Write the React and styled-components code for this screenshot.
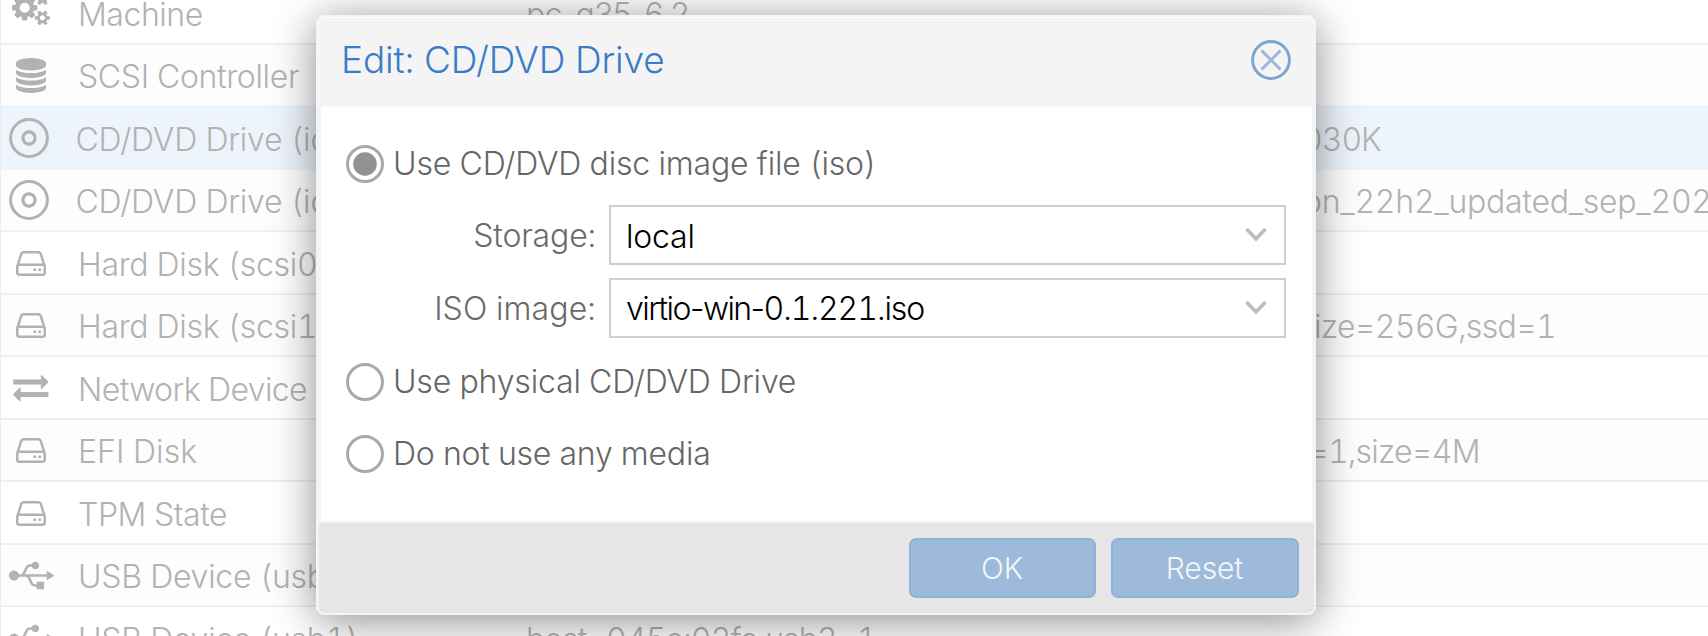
import React from "react";
import styled, { createGlobalStyle } from "styled-components";
import { FaUsb } from "react-icons/fa";

const GlobalStyle = createGlobalStyle`
  * { box-sizing: border-box; }
  body {
    margin: 0;
    overflow: hidden;
    background: #fff;
    font-family: Inter, "Liberation Sans", sans-serif;
    font-weight: 300;
    font-variant-numeric: tabular-nums;
  }
`;

const Screen = styled.div`
  position: relative;
  width: 1708px;
  height: 636px;
  overflow: hidden;
`;

const Grid = styled.div`
  display: flex;
  flex-direction: column;
  border-left: 1px solid #ececec;
`;

const Row = styled.div`
  display: flex;
  flex: none;
  align-items: flex-end;
  height: ${(p) => p.$height}px;
  overflow: hidden;
  color: #b2b2b2;
  background: ${(p) => (p.$selected ? "#edf4fb" : p.$striped ? "#fdfdfd" : "#fff")};
  border-bottom: 2px solid ${(p) => (p.$blueLine ? "#edf4fb" : "#efefef")};
`;

const IconCell = styled.div`
  display: flex;
  flex: none;
  align-items: center;
  justify-content: center;
  width: ${(p) => p.$width}px;
  height: 60px;
  padding-bottom: ${(p) => p.$lift || 0}px;

  svg { display: block; flex: none; }
`;

const Cell = styled.div`
  flex: none;
  width: ${(p) => p.$width}px;
  height: 60px;
  padding-top: 2px;
  padding-left: ${(p) => p.$inset}px;
  line-height: 60px;
  font-size: 32px;
  white-space: nowrap;
  letter-spacing: ${(p) => p.$track || 0}px;
  font-variant-numeric: ${(p) => (p.$proportional ? "normal" : "tabular-nums")};
`;

const Dialog = styled.section`
  position: absolute;
  left: 316px;
  top: 15px;
  display: flex;
  flex-direction: column;
  width: 1000px;
  height: 600px;
  overflow: hidden;
  background: #f4f4f4;
  border: 2px solid #f4f4f4;
  border-radius: 9px;
`;

const Shadow = styled.div`
  position: absolute;
  left: 316px;
  top: 15px;
  width: 1000px;
  height: 600px;
  border-radius: 9px;
  box-shadow: 0 6px 44px rgba(0, 0, 0, 0.45);
`;

const Header = styled.header`
  display: flex;
  flex: none;
  align-items: center;
  justify-content: space-between;
  height: 90px;
  padding: 0 23px 6px 22px;
  border-top: 1px solid #fff;
  border-left: 1px solid #fafafa;
`;

const Title = styled.h1`
  margin: 0;
  font-size: 37px;
  font-weight: 300;
  line-height: 50px;
  letter-spacing: ${(p) => p.$track}px;
  color: #3a7cca;
`;

const Body = styled.div`
  display: flex;
  flex: none;
  flex-direction: column;
  height: 414px;
  margin: 0 2px 0 3px;
  padding: 21px 24px 0 25px;
  background: #fff;
`;

const Option = styled.label`
  display: flex;
  align-items: center;
  height: 72px;
  color: #666;
`;

const OptionText = styled.span`
  padding: 0 0 1px 9px;
  font-size: 32px;
  line-height: 60px;
  white-space: nowrap;
  letter-spacing: ${(p) => p.$track}px;
`;

const Field = styled.div`
  display: flex;
  align-items: center;
  height: 60px;
  margin: 5px 0 8px;
`;

const FieldLabel = styled.span`
  width: 263px;
  padding-right: 13px;
  text-align: right;
  font-size: 32px;
  color: #6a6a6a;
  white-space: nowrap;
  letter-spacing: ${(p) => p.$track}px;
`;

const Select = styled.div`
  display: flex;
  align-items: center;
  justify-content: space-between;
  width: 677px;
  height: 60px;
  padding: 0 17px 0 15px;
  background: #fff;
  border: 2px solid #cecece;

  svg { margin-bottom: 1px; }
`;

const SelectValue = styled.span`
  padding-top: ${(p) => p.$drop}px;
  font-size: 32px;
  color: #000;
  white-space: nowrap;
  letter-spacing: ${(p) => p.$track}px;
`;

const Name = styled.span`
  font-variant-numeric: normal;
  letter-spacing: -1.55px;
`;

const Footer = styled.footer`
  display: flex;
  flex: none;
  align-items: center;
  justify-content: flex-end;
  gap: 15px;
  height: 92px;
  margin-left: 1px;
  padding-right: 15px;
  background: #e6e6e6;
  border-top: 2px solid #f4f4f4;
`;

const Button = styled.button`
  width: ${(p) => p.$width}px;
  height: 60px;
  padding: 0 1px 0 0;
  font: inherit;
  font-size: 30px;
  letter-spacing: ${(p) => p.$track}px;
  color: #f3f5f8;
  background: #9dbadb;
  border: 2px solid #8fb2db;
  border-radius: 7px;
`;

const GlyphIcon = ({ box, width, height, d }) => (
  <svg viewBox={box} width={width} height={height} fill="currentColor">
    <path d={d} />
  </svg>
);

const COGS =
  "M896 896q0-106-75-181t-181-75-181 75-75 181 75 181 181 75 181-75 75-181zM1664 1408q0-52-38-90t-90-38-90 38-38 90q0 53 37.5 90.5t90.5 37.5 90.5-37.5 37.5-90.5zM1664 384q0-52-38-90t-90-38-90 38-38 90q0 53 37.5 90.5t90.5 37.5 90.5-37.5 37.5-90.5zM1280 805v185q0 10-7 19.5t-16 10.5l-155 24q-11 35-32 76 34 48 90 115 7 11 7 20 0 12-7 19-23 30-82.5 89.5t-78.5 59.5q-11 0-21-7l-115-90q-37 19-77 31-11 108-23 155-7 24-30 24h-186q-11 0-20-7.5t-10-17.5l-23-153q-34-10-75-31l-118 89q-7 7-20 7-11 0-21-8-144-133-144-160 0-9 7-19 10-14 41-53t47-61q-23-44-35-82l-152-24q-10-1-17-9.5t-7-19.5v-185q0-10 7-19.5t16-10.5l155-24q11-35 32-76-34-48-90-115-7-11-7-20 0-12 7-20 22-30 82-89t79-59q11 0 21 7l115 90q34-18 77-32 11-108 23-154 7-24 30-24h186q11 0 20 7.5t10 17.5l23 153q34 10 75 31l118-89q8-7 20-7 11 0 21 8 144 133 144 160 0 8-7 19-12 16-42 54t-45 60q23 48 34 82l152 23q10 2 17 10.5t7 19.5zM1920 1338v140q0 16-149 31-12 27-30 52 51 113 51 138 0 4-4 7-122 71-124 71-8 0-46-47t-52-68q-20 2-30 2t-30-2q-14 21-52 68t-46 47q-2 0-124-71-4-3-4-7 0-25 51-138-18-25-30-52-149-15-149-31v-140q0-16 149-31 13-29 30-52-51-113-51-138 0-4 4-7 4-2 35-20t59-34 30-16q8 0 46 46.5t52 67.5q20-2 30-2t30 2q51-71 92-112l6-2q4 0 124 70 4 3 4 7 0 25-51 138 17 23 30 52 149 15 149 31zM1920 314v140q0 16-149 31-12 27-30 52 51 113 51 138 0 4-4 7-122 71-124 71-8 0-46-47t-52-68q-20 2-30 2t-30-2q-14 21-52 68t-46 47q-2 0-124-71-4-3-4-7 0-25 51-138-18-25-30-52-149-15-149-31v-140q0-16 149-31 13-29 30-52-51-113-51-138 0-4 4-7 4-2 35-20t59-34 30-16q8 0 46 46.5t52 67.5q20-2 30-2t30 2q51-71 92-112l6-2q4 0 124 70 4 3 4 7 0 25-51 138 17 23 30 52 149 15 149 31z";
const DATABASE =
  "M768 768q237 0 443-43t325-127v170q0 69-103 128t-280 93.5-385 34.5-385-34.5-280-93.5-103-128v-170q119 84 325 127t443 43zM768 1536q237 0 443-43t325-127v170q0 69-103 128t-280 93.5-385 34.5-385-34.5-280-93.5-103-128v-170q119 84 325 127t443 43zM768 1152q237 0 443-43t325-127v170q0 69-103 128t-280 93.5-385 34.5-385-34.5-280-93.5-103-128v-170q119 84 325 127t443 43zM768 0q208 0 385 34.5t280 93.5 103 128v128q0 69-103 128t-280 93.5-385 34.5-385-34.5-280-93.5-103-128v-128q0-69 103-128t280-93.5 385-34.5z";
const HDD =
  "M1040 1056q0 33-23.5 56.5t-56.5 23.5-56.5-23.5-23.5-56.5 23.5-56.5 56.5-23.5 56.5 23.5 23.5 56.5zM1296 1056q0 33-23.5 56.5t-56.5 23.5-56.5-23.5-23.5-56.5 23.5-56.5 56.5-23.5 56.5 23.5 23.5 56.5zM1408 1216v-320q0-13-9.5-22.5t-22.5-9.5h-1216q-13 0-22.5 9.5t-9.5 22.5v320q0 13 9.5 22.5t22.5 9.5h1216q13 0 22.5-9.5t9.5-22.5zM178 736h1180l-157-482q-4-13-16-21.5t-26-8.5h-782q-14 0-26 8.5t-16 21.5zM1536 896v320q0 66-47 113t-113 47h-1216q-66 0-113-47t-47-113v-320q0-25 16-75l197-606q17-53 63-86t101-33h782q55 0 101 33t63 86l197 606q16 50 16 75z";
const EXCHANGE =
  "M1792 1184v192q0 13-9.5 22.5t-22.5 9.5h-1376v192q0 13-9.5 22.5t-22.5 9.5q-12 0-24-10l-319-320q-9-9-9-22 0-14 9-23l320-320q9-9 23-9 13 0 22.5 9.5t9.5 22.5v192h1376q13 0 22.5 9.5t9.5 22.5zM1792 640q0 14-9 23l-320 320q-9 9-23 9-13 0-22.5-9.5t-9.5-22.5v-192h-1376q-13 0-22.5-9.5t-9.5-22.5v-192q0-13 9.5-22.5t22.5-9.5h1376v-192q0-14 9-23t23-9q12 0 24 10l319 319q9 9 9 23z";

const icons = {
  cogs: { width: 60, lift: 10, node: <GlyphIcon box="0 0 1920 1792" width={38} height={35.5} d={COGS} /> },
  database: { width: 60, lift: 0, node: <GlyphIcon box="0 0 1536 1792" width={30} height={35} d={DATABASE} /> },
  hdd: { width: 60, lift: 0, node: <GlyphIcon box="0 96 1536 1280" width={30} height={25} d={HDD} /> },
  exchange: { width: 60, lift: 0, node: <GlyphIcon box="0 287 1792 1346" width={35.5} height={26.5} d={EXCHANGE} /> },
  usb: { width: 60, lift: 0, node: <FaUsb size={45} /> },
  disc: {
    width: 56,
    lift: 0,
    node: (
      <svg width="40" height="40" fill="none" stroke="currentColor">
        <circle cx="20" cy="20" r="18.4" strokeWidth="3" />
        <circle cx="20" cy="20" r="6.1" strokeWidth="3.2" />
      </svg>
    ),
  },
};

const rows = [
  { icon: "cogs", label: "Machine", lt: -0.45, h: 45, value: "pc-q35-6.2", vt: -0.75, proportional: true },
  { icon: "database", label: "SCSI Controller", lt: -0.35, h: 62, blueLine: true, striped: true },
  { icon: "disc", label: "CD/DVD Drive (ide0)", lt: -0.2, h: 63, blueLine: true, selected: true, tail: "030K", tt: -1, x: 1302 },
  { icon: "disc", label: "CD/DVD Drive (ide2)", lt: -0.2, h: 62, striped: true, tail: "on_22h2_updated_sep_202", tt: -0.25, x: 1303 },
  { icon: "hdd", label: "Hard Disk (scsi0)", lt: -0.3, h: 63 },
  { icon: "hdd", label: "Hard Disk (scsi1)", lt: -0.3, h: 62, striped: true, tail: "ize=256G,ssd=1", tt: -0.7, x: 1314 },
  { icon: "exchange", label: "Network Device", lt: -0.6, h: 63 },
  { icon: "hdd", label: "EFI Disk", lt: 0.05, h: 62, striped: true, tail: "=1,size=4M", tt: -0.8, x: 1308 },
  { icon: "hdd", label: "TPM State", lt: -0.45, h: 63 },
  { icon: "usb", label: "USB Device (usb0)", lt: -0.25, h: 62, striped: true },
  { icon: "usb", label: "USB Device (usb1)", lt: -0.25, h: 63, value: "host=045e:02fe,usb3=1", vt: -0.9 },
];

const Radio = ({ checked }) => (
  <svg width="38" height="38" viewBox="0 0 38 38">
    <circle cx="19" cy="19" r="17.5" fill="#fff" stroke="#a9a9a9" strokeWidth="3" />
    {checked && <circle cx="19" cy="19" r="11.8" fill="#929292" />}
  </svg>
);

const Chevron = () => (
  <svg width="22" height="16" viewBox="0 0 22 16" fill="none" stroke="#bdbdbd" strokeWidth="3.6">
    <path d="M1.5 2 L11 11.8 L20.5 2" />
  </svg>
);

const CloseIcon = () => (
  <svg width="40" height="40" viewBox="0 0 40 40" fill="none">
    <circle cx="20" cy="20" r="18.4" stroke="#7fa5ce" strokeWidth="3" />
    <path d="M10.5 10.5 L29.5 29.5 M29.5 10.5 L10.5 29.5" stroke="#9ab6e0" strokeWidth="3" />
  </svg>
);

export default function App() {
  return (
    <Screen>
      <GlobalStyle />
      <Grid>
        {rows.map((r, i) => {
          const icon = icons[r.icon];
          const start = r.icon === "disc" ? 74.5 : 77;
          return (
            <Row key={i} $height={r.h} $selected={r.selected} $striped={r.striped} $blueLine={r.blueLine}>
              <IconCell $width={icon.width} $lift={icon.lift}>{icon.node}</IconCell>
              <Cell $width={525 - icon.width} $inset={start - icon.width} $track={r.lt}>{r.label}</Cell>
              {r.value && (
                <Cell $width={700} $inset={0} $track={r.vt} $proportional={r.proportional}>{r.value}</Cell>
              )}
              {r.tail && <Cell $width={1182} $inset={r.x - 526} $track={r.tt}>{r.tail}</Cell>}
            </Row>
          );
        })}
      </Grid>
      <Shadow />
      <Dialog>
        <Header>
          <Title $track={-0.13}>Edit: CD/DVD Drive</Title>
          <CloseIcon />
        </Header>
        <Body>
          <Option>
            <Radio checked />
            <OptionText $track={-0.17}>Use CD/DVD disc image file (iso)</OptionText>
          </Option>
          <Field>
            <FieldLabel $track={-0.15}>Storage:</FieldLabel>
            <Select>
              <SelectValue $drop={3} $track={-0.2}>local</SelectValue>
              <Chevron />
            </Select>
          </Field>
          <Field>
            <FieldLabel $track={0.1}>ISO image:</FieldLabel>
            <Select>
              <SelectValue $drop={1} $track={-1.05}><Name>virtio-win-</Name>0.1.221.iso</SelectValue>
              <Chevron />
            </Select>
          </Field>
          <Option>
            <Radio />
            <OptionText $track={-0.18}>Use physical CD/DVD Drive</OptionText>
          </Option>
          <Option>
            <Radio />
            <OptionText $track={-0.23}>Do not use any media</OptionText>
          </Option>
        </Body>
        <Footer>
          <Button $width={187} $track={0}>OK</Button>
          <Button $width={188} $track={-0.1}>Reset</Button>
        </Footer>
      </Dialog>
    </Screen>
  );
}
